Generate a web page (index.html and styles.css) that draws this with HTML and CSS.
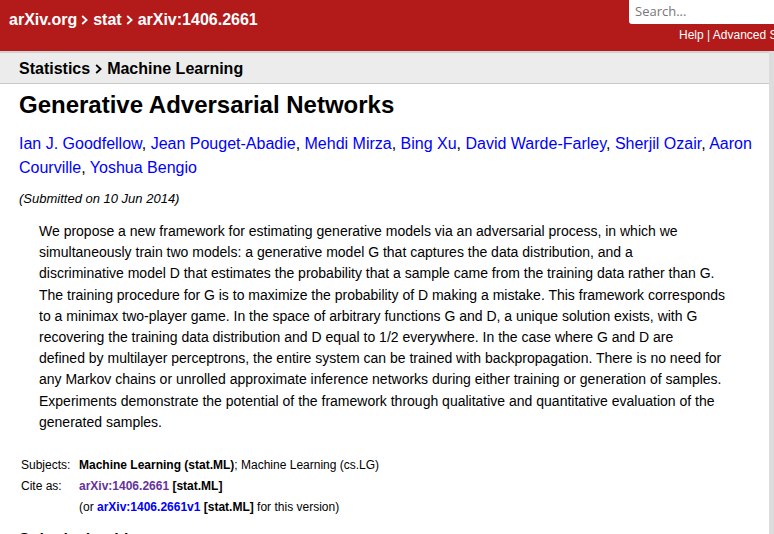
FILE: index.html
```html
<!DOCTYPE html>
<html>
<head>
<meta charset="utf-8">
<link rel="stylesheet" href="styles.css">
</head>
<body>
<header class="masthead">
  <div class="crumbs"><a href="#">arXiv.org</a><svg class="chev" viewBox="0 0 7 10" width="7" height="10"><path d="M1.2 1 L5.6 5 L1.2 9" fill="none" stroke="currentColor" stroke-width="1.8"/></svg><a href="#">stat</a><svg class="chev" viewBox="0 0 7 10" width="7" height="10"><path d="M1.2 1 L5.6 5 L1.2 9" fill="none" stroke="currentColor" stroke-width="1.8"/></svg><span>arXiv:1406.2661</span></div>
  <div class="search">
    <input class="search-input" type="text" placeholder="Search...">
    <div class="search-links"><a href="#">Help</a> | <a href="#">Advanced Search</a></div>
  </div>
</header>
<div class="page">
  <main class="content">
    <div class="subheader">Statistics<svg class="chev" viewBox="0 0 7 10" width="7" height="10"><path d="M1.2 1 L5.6 5 L1.2 9" fill="none" stroke="currentColor" stroke-width="1.8"/></svg>Machine Learning</div>
    <div class="paper">
      <h1 class="title">Generative Adversarial Networks</h1>
      <div class="authors"><a href="#">Ian J. Goodfellow</a>, <a href="#">Jean Pouget-Abadie</a>, <a href="#">Mehdi Mirza</a>, <a href="#">Bing Xu</a>, <a href="#">David Warde-Farley</a>, <a href="#">Sherjil Ozair</a>, <a href="#">Aaron Courville</a>, <a href="#">Yoshua Bengio</a></div>
      <div class="dateline">(Submitted on 10 Jun 2014)</div>
      <blockquote class="abstract">We propose a new framework for estimating generative models via an adversarial process, in which we<br>
simultaneously train two models: a generative model G that captures the data distribution, and a<br>
discriminative model D that estimates the probability that a sample came from the training data rather than G.<br>
The training procedure for G is to maximize the probability of D making a mistake. This framework corresponds<br>
to a minimax two-player game. In the space of arbitrary functions G and D, a unique solution exists, with G<br>
recovering the training data distribution and D equal to 1/2 everywhere. In the case where G and D are<br>
defined by multilayer perceptrons, the entire system can be trained with backpropagation. There is no need for<br>
any Markov chains or unrolled approximate inference networks during either training or generation of samples.<br>
Experiments demonstrate the potential of the framework through qualitative and quantitative evaluation of the<br>
generated samples.</blockquote>
      <table class="meta">
        <tr><td class="label">Subjects:</td><td><b>Machine Learning (stat.ML)</b>; Machine Learning (cs.LG)</td></tr>
        <tr><td class="label">Cite as:</td><td><a class="visited" href="#">arXiv:1406.2661</a> <b>[stat.ML]</b></td></tr>
        <tr><td class="label"></td><td>(or <a href="#">arXiv:1406.2661v1</a> <b>[stat.ML]</b> for this version)</td></tr>
      </table>
      <h2 class="history">Submission history</h2>
    </div>
  </main>
  <aside class="rail"></aside>
</div>
</body>
</html>
```
FILE: styles.css
```css
html, body {
  margin: 0;
  padding: 0;
  height: 100%;
  overflow: hidden;
}
body {
  font-family: "Liberation Sans", Arial, sans-serif;
  color: #000;
  background: #fff;
}
a { text-decoration: none; }

.chev {
  display: inline-block;
  vertical-align: 0;
  margin: 0 5px 0 4px;
}

.masthead {
  background: #b31b1b;
  height: 51px;
  display: flex;
  justify-content: space-between;
  overflow: hidden;
}
.crumbs {
  padding: 11px 0 0 9px;
  font-size: 16px;
  font-weight: bold;
  color: #fff;
  white-space: nowrap;
}
.crumbs a { color: #fff; }

.search {
  width: 145px;
  flex: none;
  display: flex;
  flex-direction: column;
  align-items: flex-start;
}
.search-input {
  box-sizing: border-box;
  width: 180px;
  height: 24px;
  border: 0;
  border-radius: 0 0 0 3px;
  padding: 0 6px 3px;
  font-family: "Open Sans", sans-serif;
  font-size: 13px;
  color: #333;
  background: #fff;
  outline: none;
}
.search-input::placeholder { color: #777; }
.search-links {
  margin: 4px 0 0 50px;
  font-size: 12px;
  color: #fff;
  white-space: nowrap;
}
.search-links a { color: #fff; }

.page {
  display: flex;
  height: calc(100% - 51px);
}
.content {
  flex: 1;
  min-width: 0;
}
.rail {
  width: 5px;
  flex: none;
  background: #dcdcdc;
}

.subheader {
  background: #ececec;
  border-top: 2px solid #d0d0d0;
  border-bottom: 1px solid #c8c8c8;
  height: 33px;
  box-sizing: border-box;
  padding: 7px 0 0 19px;
  font-size: 16px;
  font-weight: bold;
  white-space: nowrap;
  color: #000;
}
.subheader .chev { margin: 0 5px 0 5px; }

.paper { padding: 0 8px 0 19px; }
.title {
  margin: 7px 0 0;
  font-size: 24px;
  font-weight: bold;
  line-height: 28px;
}
.authors {
  margin-top: 13px;
  font-size: 16px;
  line-height: 24px;
}
.authors a { color: #00f; }
.dateline {
  margin-top: 11px;
  font-size: 13px;
  font-style: italic;
}
.abstract {
  margin: 15px 0 0 20px;
  width: 710px;
  font-size: 14px;
  line-height: 21.2px;
  white-space: nowrap;
}
.meta {
  margin-top: 21px;
  border-collapse: collapse;
  font-size: 12px;
}
.meta td {
  padding: 0 4px 0 2px;
  height: 21px;
  vertical-align: middle;
}
.meta .label { width: 52px; }
.meta a { color: #00f; font-weight: bold; }
.meta a.visited { color: #639; }
.history {
  margin: 14px 0 0;
  font-size: 16px;
  font-weight: bold;
}
```
